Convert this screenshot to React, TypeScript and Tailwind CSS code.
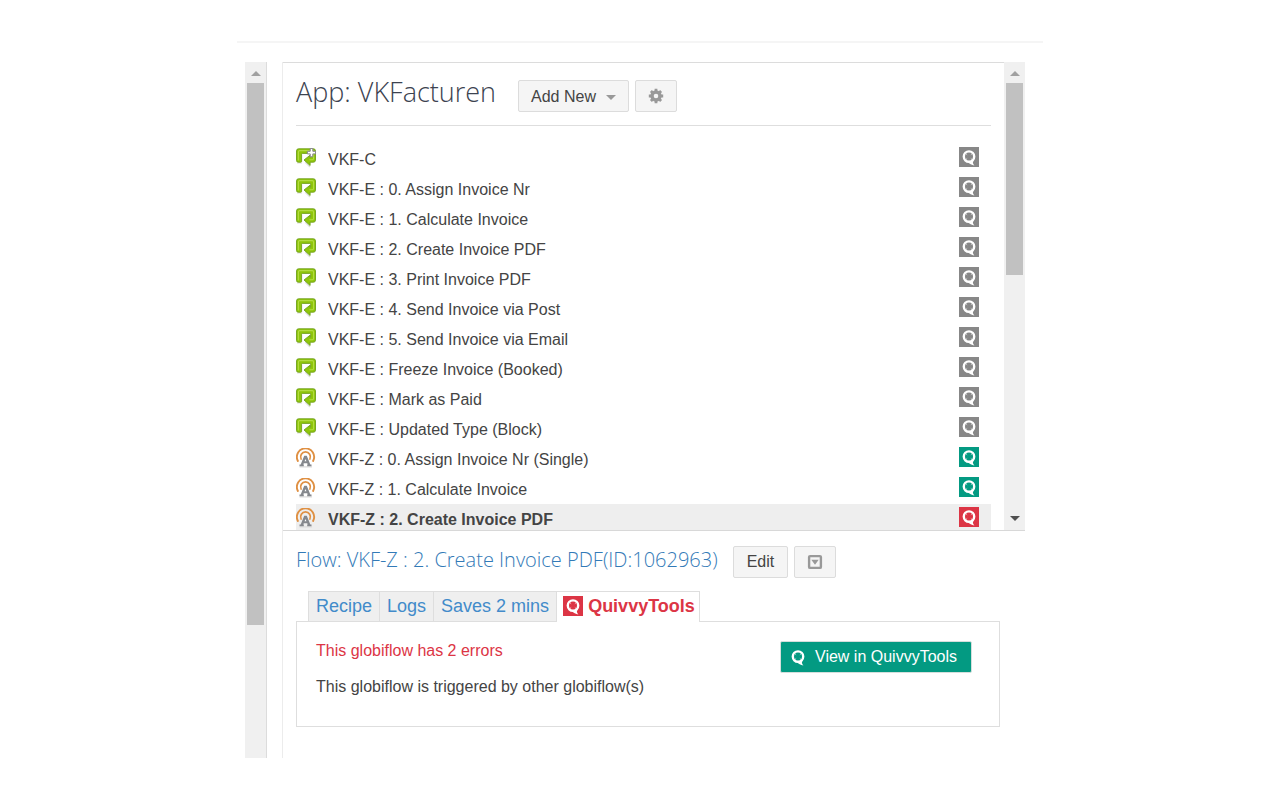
import { useState } from "react"

type Kind = "create" | "update" | "hook"
type Tone = "gray" | "green" | "red"

interface Flow {
  name: string
  kind: Kind
  tone: Tone
}

const flows: Flow[] = [
  { name: "VKF-C", kind: "create", tone: "gray" },
  { name: "VKF-E : 0. Assign Invoice Nr", kind: "update", tone: "gray" },
  { name: "VKF-E : 1. Calculate Invoice", kind: "update", tone: "gray" },
  { name: "VKF-E : 2. Create Invoice PDF", kind: "update", tone: "gray" },
  { name: "VKF-E : 3. Print Invoice PDF", kind: "update", tone: "gray" },
  { name: "VKF-E : 4. Send Invoice via Post", kind: "update", tone: "gray" },
  { name: "VKF-E : 5. Send Invoice via Email", kind: "update", tone: "gray" },
  { name: "VKF-E : Freeze Invoice (Booked)", kind: "update", tone: "gray" },
  { name: "VKF-E : Mark as Paid", kind: "update", tone: "gray" },
  { name: "VKF-E : Updated Type (Block)", kind: "update", tone: "gray" },
  { name: "VKF-Z : 0. Assign Invoice Nr (Single)", kind: "hook", tone: "green" },
  { name: "VKF-Z : 1. Calculate Invoice", kind: "hook", tone: "green" },
  { name: "VKF-Z : 2. Create Invoice PDF", kind: "hook", tone: "red" },
]

const tones: Record<Tone, string> = {
  gray: "bg-[#878787]",
  green: "bg-[#039a82]",
  red: "bg-[#dc3545]",
}

function QMark({ className }: { className: string }) {
  return (
    <svg viewBox="0 0 20 20" className={className} aria-hidden="true">
      <circle cx="10" cy="9.6" r="5.2" fill="none" stroke="#fff" strokeWidth="2.4" />
      <path d="M7.2 6.8l.9.9M12.8 6.8l-.9.9M7.2 12.4l.9-.9M12.8 12.4l-.9-.9" stroke="#fff" strokeWidth="0.9" />
      <path d="M8.6 14.8Q12.4 15.4 14.4 13L13.9 15.8Q14.2 17.4 15.4 18.4Q11.4 18.2 8.6 14.8Z" fill="#fff" />
    </svg>
  )
}

function QBadge({ tone }: { tone: Tone }) {
  return (
    <span className={`block size-5 shrink-0 ${tones[tone]}`}>
      <QMark className="size-5" />
    </span>
  )
}

function FlowIcon({ kind }: { kind: Kind }) {
  if (kind === "hook") {
    return (
      <svg viewBox="0 0 20 20" className="size-5 shrink-0" aria-hidden="true">
        <path d="M4 18.9h11.5" stroke="#dcdcdc" strokeWidth="1.4" strokeLinecap="round" />
        <g fill="none" stroke="#df9043" strokeLinecap="round">
          <path d="M1.9 13A8.6 8.6 0 1 1 17.1 13" strokeWidth="1.9" />
          <path d="M5.1 11A4.9 4.9 0 1 1 13.9 11" strokeWidth="1.7" />
        </g>
        <path
          d="M8.2 7.8h2.6l3.5 8.8h1.2v1.7h-4.3v-1.7h.5l-.5-1.4H7.8l-.5 1.4h.5v1.7H3.5v-1.7h1.2z"
          fill="#85888d"
        />
        <path d="M9.5 10.9l.9 2.3H8.6z" fill="#fff" />
      </svg>
    )
  }
  return (
    <svg viewBox="0 0 20 20" className="size-5 shrink-0" aria-hidden="true">
      <path d="M1.5 15h4M9.5 14.6l4 4" stroke="#dcdcdc" strokeWidth="1.2" strokeLinecap="round" />
      <path
        d="M2.6.8h14.8q2.1 0 2.1 2.1v9.2q0 2.1-2.1 2.1h-3.3v3.3L8 12l6.1-4.8v2.2h.6V6.2q0-.8-.8-.8H6.4q-.8 0-.8.8v7.2q0 .8-.8.8H2.2q-1.7 0-1.7-1.7V2.9Q.5.8 2.6.8z"
        fill="#8fc60a"
        stroke="#6f9f1c"
        strokeWidth="0.9"
        strokeLinejoin="round"
      />
      <path
        d="M2.4 12.4V4q0-1.4 1.4-1.4h12.4q1.4 0 1.4 1.4v6.6q0 1.2-1.2 1.2h-3"
        fill="none"
        stroke="#b3dc44"
        strokeWidth="1.1"
      />
      {kind === "create" && (
        <path
          d="M14.2.4h2.6v2.9h2.8v2.6h-2.8v2.9h-2.6V5.9h-2.8V3.3h2.8z"
          fill="#fff"
          stroke="#85858a"
          strokeWidth="1"
        />
      )}
    </svg>
  )
}

function Scrollbar({ thumb, down }: { thumb: string; down?: boolean }) {
  return (
    <div className="flex w-[21px] shrink-0 flex-col items-center bg-[#f0f0f0]" aria-hidden="true">
      <div className="flex h-[21px] items-center pt-0.5">
        <svg viewBox="0 0 10 5" className="h-[5px] w-2.5">
          <path d="M0 5L5 0l5 5z" fill="#a0a0a0" />
        </svg>
      </div>
      <div className={`w-[17px] bg-[#c1c1c1] ${thumb}`} />
      {down && (
        <div className="mt-auto flex h-6 items-center">
          <svg viewBox="0 0 10 5" className="h-[5px] w-2.5">
            <path d="M0 0h10L5 5z" fill="#505050" />
          </svg>
        </div>
      )}
    </div>
  )
}

const button =
  "flex h-8 items-center rounded-xs border border-[#dcdcdc] bg-[#f5f5f5] text-base text-[#444]"

const tabs = ["Recipe", "Logs", "Saves 2 mins"]

export default function App() {
  const [selected, setSelected] = useState(12)

  return (
    <div className="min-h-screen bg-white px-6 pt-[41px] pb-10 font-['Liberation_Sans',Arial,sans-serif] text-base text-[#444]">
      <div className="mx-auto max-w-[806px] border-t-2 border-[#f5f5f5] pt-[19px] pr-[18px] pl-2">
        <div className="flex gap-[15px]">
          <div className="flex border-r border-[#dcdcdc]">
            <Scrollbar thumb="h-[542px]" />
          </div>

          <main className="min-w-0 flex-1 border-l border-[#ececec] pb-[31px]">
            <section className="flex h-[469px] overflow-hidden border-b border-[#d8d8d8]">
              <div className="min-w-0 flex-1 border-t border-[#dcdcdc] px-[13px]">
                <header className="flex h-[63px] items-start gap-1.5 border-b border-[#dedede]">
                  <h1 className="mt-[11px] mr-4 font-['Open_Sans','Noto_Sans',sans-serif] text-[27px] leading-9 font-light text-[#3c4350]">
                    App: VKFacturen
                  </h1>
                  <button type="button" className={`${button} mt-[17px] gap-2.5 px-3 pt-0.5`}>
                    Add New
                    <svg viewBox="0 0 10 5" className="h-[5px] w-2.5" aria-hidden="true">
                      <path d="M0 0h10L5 5z" fill="#999" />
                    </svg>
                  </button>
                  <button type="button" aria-label="Settings" className={`${button} mt-[17px] px-3`}>
                    <svg viewBox="0 0 16 16" className="size-4" aria-hidden="true">
                      <circle cx="8" cy="8" r="4" fill="none" stroke="#999" strokeWidth="3.4" />
                      <path
                        d="M8 .8v3M8 12.2v3M.8 8h3M12.2 8h3M2.9 2.9l2 2M11.1 11.1l2 2M2.9 13.1l2-2M11.1 4.9l2-2"
                        stroke="#999"
                        strokeWidth="2.8"
                      />
                    </svg>
                  </button>
                </header>

                <ul className="mt-[18px]">
                  {flows.map((flow, i) => (
                    <li key={flow.name}>
                      <button
                        type="button"
                        onClick={() => setSelected(i)}
                        className={`flex h-[30px] w-full items-start pr-3 text-left ${
                          i === selected ? "bg-[#eee] font-bold" : ""
                        }`}
                      >
                        <span className="mt-1">
                          <FlowIcon kind={flow.kind} />
                        </span>
                        <span className="ml-3 flex-1 truncate leading-8">{flow.name}</span>
                        <span className="mt-[3px]">
                          <QBadge tone={flow.tone} />
                        </span>
                      </button>
                    </li>
                  ))}
                </ul>
              </div>
              <Scrollbar thumb="h-[192px]" down />
            </section>

            <section className="pt-[15px] pr-[25px] pl-[13px]">
              <header className="flex items-start gap-1.5">
                <h2 className="mr-[9px] font-['Open_Sans','Noto_Sans',sans-serif] text-xl leading-7 font-light text-[#337ab7]">
                  Flow: VKF-Z : 2. Create Invoice PDF(ID:1062963)
                </h2>
                <button type="button" className={`${button} px-[13px]`}>
                  Edit
                </button>
                <button type="button" aria-label="More actions" className={`${button} px-3`}>
                  <svg viewBox="0 0 16 16" className="size-4" aria-hidden="true">
                    <rect x="2.1" y="2.1" width="11.8" height="11.8" rx="1" fill="none" stroke="#999" strokeWidth="2.4" />
                    <path d="M4.3 5.8h7.4L8 10.8z" fill="#999" />
                  </svg>
                </button>
              </header>

              <nav className="mt-[13px] ml-3 flex text-lg leading-7">
                {tabs.map((tab) => (
                  <a
                    key={tab}
                    href="#"
                    className="h-[30px] border-t border-r border-l border-[#dedede] bg-[#efefef] px-[7px] text-[#428bca] not-first:border-l-0"
                  >
                    {tab}
                  </a>
                ))}
                <a
                  href="#"
                  className="-mb-px flex h-[31px] items-center gap-[5px] border-t border-r border-[#dedede] bg-white pr-1 pb-0.5 pl-1.5 font-bold text-[#dc3545]"
                >
                  <QBadge tone="red" />
                  QuivvyTools
                </a>
              </nav>

              <div className="flex items-start justify-between border border-[#dedede] pt-[19px] pr-[27px] pb-[29px] pl-[19px]">
                <div>
                  <p className="leading-5 text-[#dc3545]">This globiflow has 2 errors</p>
                  <p className="mt-4 leading-5">This globiflow is triggered by other globiflow(s)</p>
                </div>
                <button
                  type="button"
                  className="flex h-8 items-center gap-[7px] rounded-xs border border-[#d5dedc] bg-[#039a82] pr-3.5 pl-[7px] text-white"
                >
                  <QMark className="size-5" />
                  View in QuivvyTools
                </button>
              </div>
            </section>
          </main>
        </div>
      </div>
    </div>
  )
}
